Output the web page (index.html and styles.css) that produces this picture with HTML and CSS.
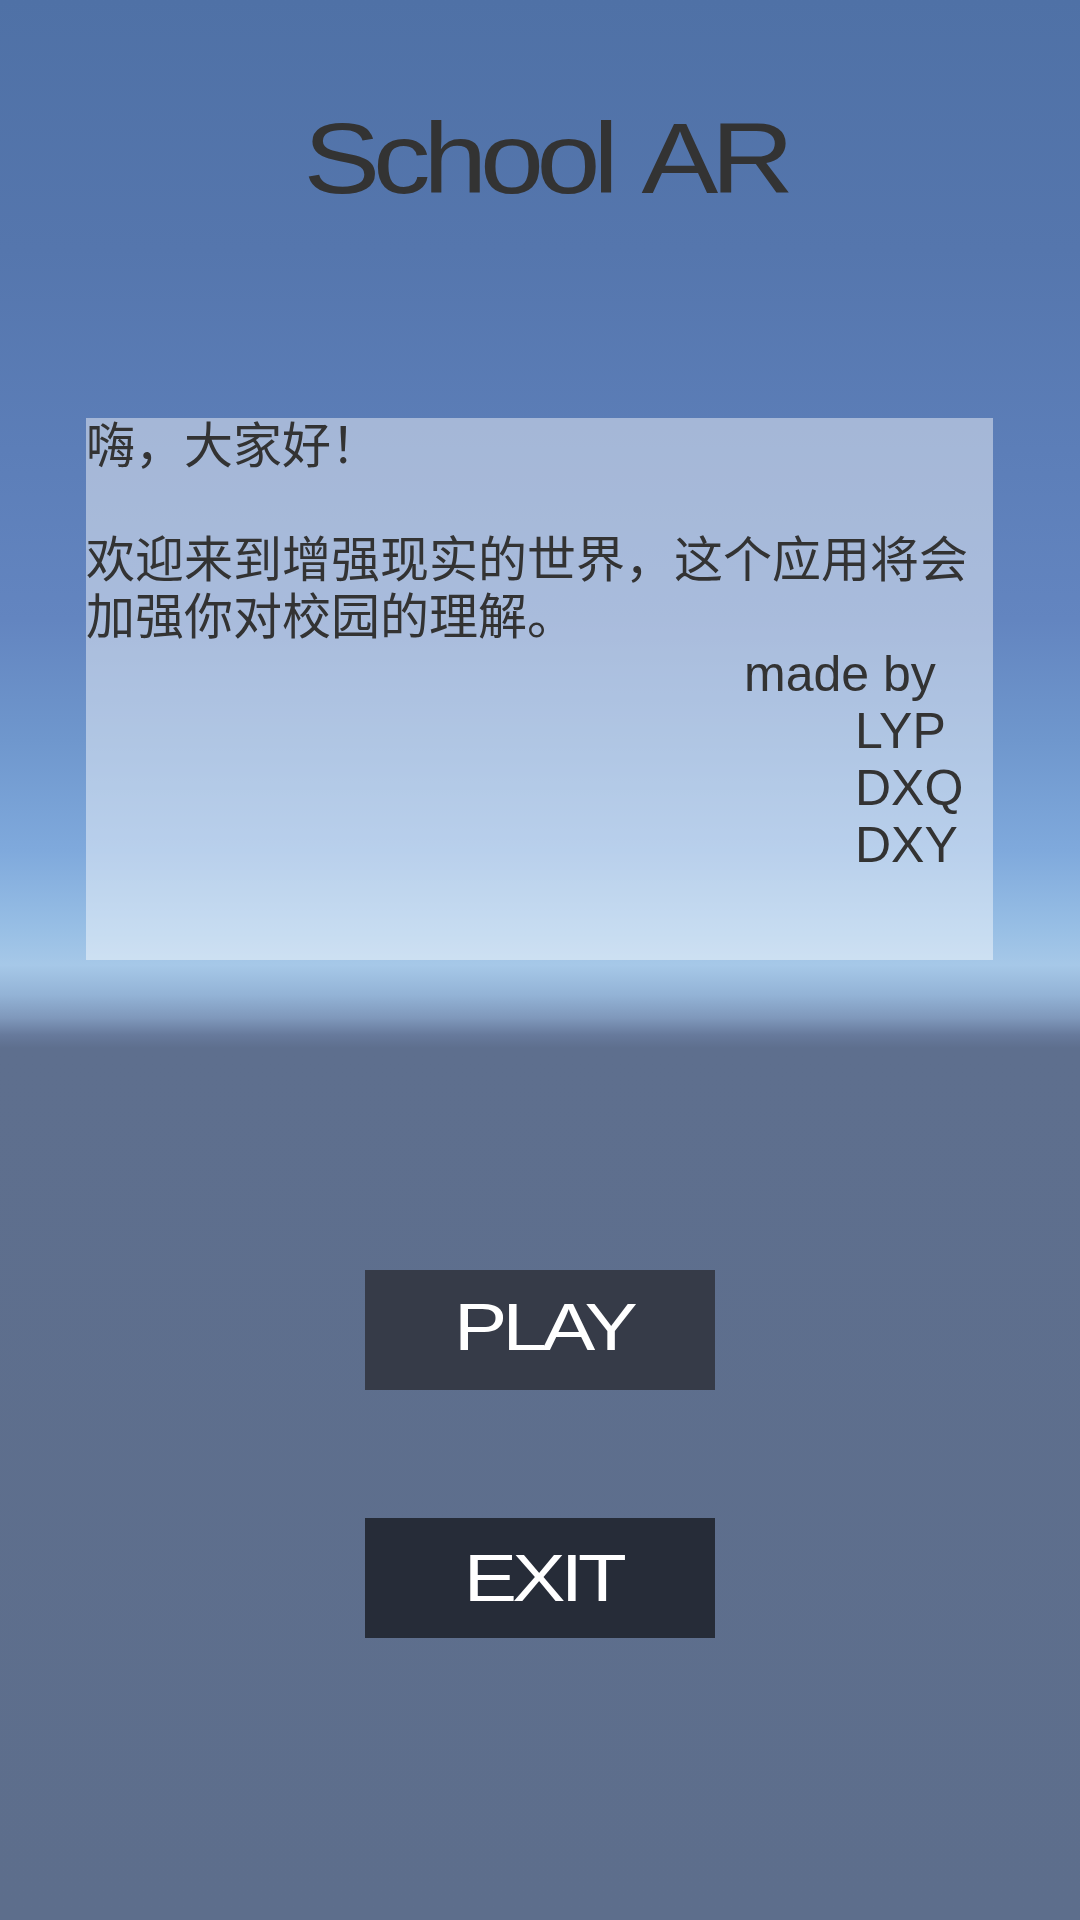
FILE: index.html
```html
<!DOCTYPE html>
<html lang="zh-CN">
<head>
<meta charset="utf-8">
<title>School AR</title>
<link rel="stylesheet" href="styles.css">
</head>
<body>
<div class="screen">
  <h1 class="title"><span class="title-text">School AR</span></h1>
  <div class="panel">
    <div class="line">嗨，大家好！</div>
    <div class="line empty"></div>
    <div class="line">欢迎来到增强现实的世界，这个应用将会</div>
    <div class="line">加强你对校园的理解。</div>
    <div class="line latin credit">made by</div>
    <div class="line latin name">LYP</div>
    <div class="line latin name">DXQ</div>
    <div class="line latin name">DXY</div>
  </div>
  <button class="btn btn-play"><span class="btn-text">PLAY</span></button>
  <button class="btn btn-exit"><span class="btn-text">EXIT</span></button>
</div>
</body>
</html>
```

FILE: styles.css
```css
html, body {
  margin: 0;
  padding: 0;
}
body {
  width: 1080px;
  height: 1920px;
  overflow: hidden;
  font-family: "Liberation Sans", "Noto Sans CJK SC", sans-serif;
}
.screen {
  width: 1080px;
  height: 1920px;
  display: flex;
  flex-direction: column;
  align-items: center;
  background: linear-gradient(180deg,
    #4f71a6 0px,
    #5576ad 250px,
    #5c7eb8 450px,
    #6385c0 620px,
    #6f97cd 740px,
    #7fa9dc 850px,
    #98bfe5 930px,
    #a6c8e8 965px,
    #93b3d6 995px,
    #7f98bb 1018px,
    #677a9c 1035px,
    #5e6f8e 1048px,
    #5d6e8c 1920px);
}
.title {
  margin: 108px 0 0 0;
  padding-left: 10px;
  height: 100px;
  line-height: 100px;
  font-size: 100px;
  font-weight: normal;
  color: #333333;
  letter-spacing: -6.3px;
  word-spacing: 10px;
}
.title-text {
  display: inline-block;
  transform: scaleX(1.15);
}
.panel {
  align-self: flex-start;
  margin: 210px 0 0 86px;
  width: 907px;
  height: 542px;
  background: rgba(255, 255, 255, 0.45);
  color: #333333;
  font-size: 49px;
  line-height: 57px;
}
.line {
  height: 57px;
  white-space: nowrap;
}
.latin {
  font-size: 50px;
}
.credit {
  padding-left: 658px;
}
.name {
  padding-left: 769px;
}
.btn {
  width: 350px;
  height: 120px;
  border: 0;
  padding: 0;
  display: flex;
  align-items: center;
  justify-content: center;
  font-family: "Liberation Sans", sans-serif;
  font-size: 66px;
  line-height: 120px;
  color: #ffffff;
  letter-spacing: -4px;
}
.btn-text {
  display: inline-block;
  transform: scaleX(1.21);
  padding-left: 5px;
}
.btn-play {
  margin-top: 310px;
  background: #363b48;
  padding-bottom: 6px;
}
.btn-exit {
  margin-top: 128px;
  background: #262c38;
}
```
